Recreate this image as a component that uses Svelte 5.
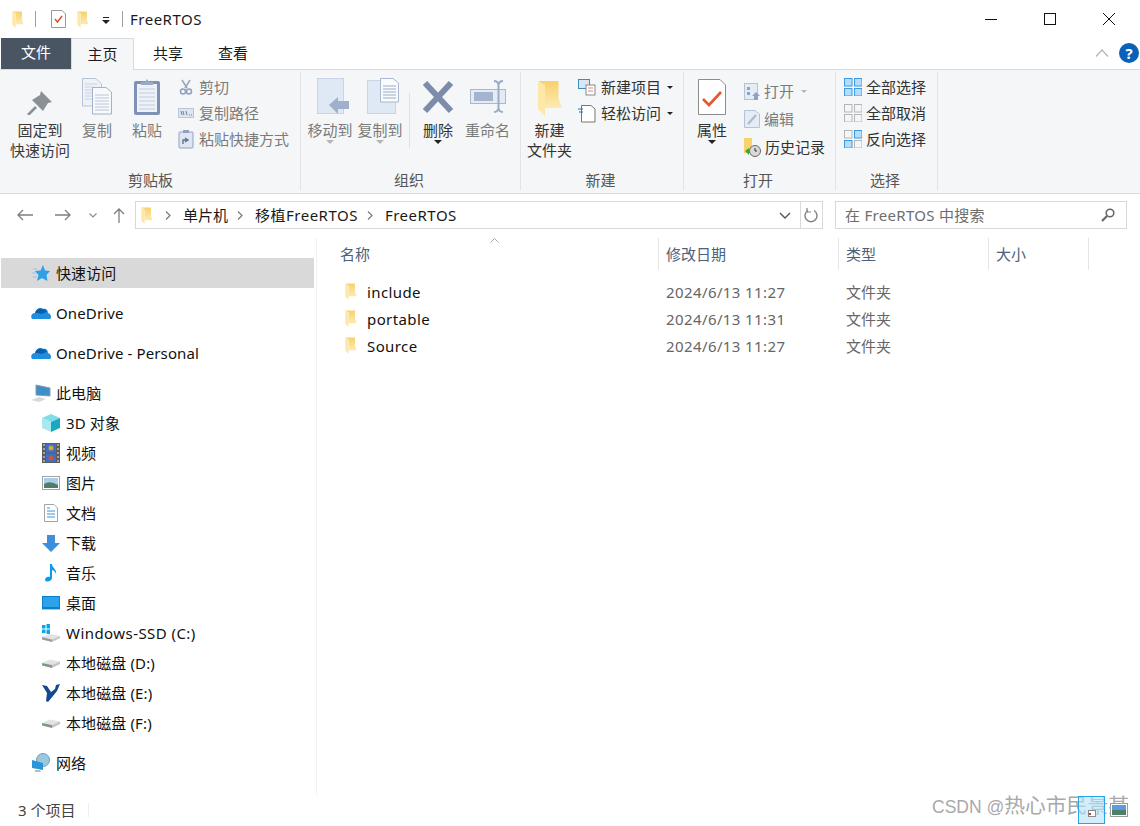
<script>
  const quick = [
    { label: '快速访问', icon: 'star', lvl: 1, active: true, gap: 10 },
    { label: 'OneDrive', icon: 'cloud', lvl: 1, gap: 10 },
    { label: 'OneDrive - Personal', icon: 'cloud', lvl: 1, gap: 10 },
    { label: '此电脑', icon: 'pc', lvl: 1 },
    { label: '3D 对象', icon: 'cube', lvl: 2 },
    { label: '视频', icon: 'film', lvl: 2 },
    { label: '图片', icon: 'pic', lvl: 2 },
    { label: '文档', icon: 'doc', lvl: 2 },
    { label: '下载', icon: 'down', lvl: 2 },
    { label: '音乐', icon: 'music', lvl: 2 },
    { label: '桌面', icon: 'desk', lvl: 2 },
    { label: 'Windows-SSD (C:)', icon: 'win', lvl: 2, wide: true },
    { label: '本地磁盘 (D:)', icon: 'disk', lvl: 2 },
    { label: '本地磁盘 (E:)', icon: 'ni', lvl: 2 },
    { label: '本地磁盘 (F:)', icon: 'disk', lvl: 2, gap: 10 },
    { label: '网络', icon: 'net', lvl: 1 }
  ];
  const files = [
    { name: 'include', date: '2024/6/13 11:27' },
    { name: 'portable', date: '2024/6/13 11:31' },
    { name: 'Source', date: '2024/6/13 11:27' }
  ];
</script>

{#snippet folder(w, h)}
  <svg width={w} height={h} viewBox="0 0 24 36">
    <defs>
      <linearGradient id="fg" x1="0" y1="0" x2="0" y2="1">
        <stop offset="0" stop-color="#f7d16c" />
        <stop offset="1" stop-color="#fdeab4" />
      </linearGradient>
    </defs>
    <path d="M0 1 H20.5 V19 L24 28 H7 V6Z" fill="url(#fg)" />
    <path d="M0 1 L7 5 V36 L0 29Z" fill="#fde8a8" />
  </svg>
{/snippet}

{#snippet grid(a, b, c, d)}
  <svg width="18" height="18" viewBox="0 0 18 18">
    {#each [[0, 0, a], [10, 0, b], [0, 10, c], [10, 10, d]] as [x, y, on]}
      <rect x={x + 0.5} y={y + 0.5} width="7.5" height="7.5" fill={on ? '#b5dcfb' : '#f5f6f7'} stroke={on ? '#3b9ae2' : '#b5b5b5'} />
    {/each}
  </svg>
{/snippet}

{#snippet chev()}
  <svg class="chev" width="10" height="9" viewBox="0 0 10 9"><path d="M3 .5 L7 4.5 L3 8.5" fill="none" stroke="#7a7a7a" stroke-width="1.2" /></svg>
{/snippet}

{#snippet navIcon(t)}
  {#if t === 'star'}
    <svg width="18" height="18" viewBox="0 0 18 18"><path d="M11 1 L13 6.5 L18 7 L14.5 11 L15.5 17 L10 14 L5 17 L6.5 11 L3 7 L8.5 6.5Z" fill="#2f9fe6" /><path d="M1 5h4M0 9h4M1 13h4" stroke="#8cc7ef" /></svg>
  {:else if t === 'cloud'}
    <svg width="20" height="14" viewBox="0 0 20 14"><path d="M1 13 C-1 10 1 7 4 7 C5 3 9 1 12 3 C15 2 17 4 17 7 C20 8 21 11 19 13Z" fill="#1e8fe0" /><path d="M4 7 C5 3 9 1 12 3 C14 3 15 4 16 6 L10 8 L7 7Z" fill="#0b5fa8" /></svg>
  {:else if t === 'pc'}
    <svg width="20" height="20" viewBox="0 0 20 20"><path d="M5 2 L19 5 V13 L5 12Z" fill="#3d8fc9" stroke="#8d9aa5" /><path d="M0 17 L8 14 L15 16 L8 19Z" fill="#d6d8da" /></svg>
  {:else if t === 'cube'}
    <svg width="18" height="18" viewBox="0 0 18 18"><path d="M9 0 L18 4 L9 8 L0 4Z" fill="#7fdde8" /><path d="M0 4 L9 8 V18 L0 14Z" fill="#a9e9ee" /><path d="M18 4 L9 8 V18 L18 14Z" fill="#1aa7c2" /></svg>
  {:else if t === 'film'}
    <svg width="18" height="20" viewBox="0 0 18 20"><rect width="18" height="20" fill="#5c5c5c" /><rect x="4" y="1" width="10" height="8.5" fill="#3a70c9" /><rect x="4" y="10.5" width="10" height="8.5" fill="#3a70c9" /><circle cx="9" cy="5" r="2.5" fill="#d8a23a" /><circle cx="9" cy="15" r="2.5" fill="#c9563a" /><path d="M1 2h2M1 6h2M1 10h2M1 14h2M1 18h2M15 2h2M15 6h2M15 10h2M15 14h2M15 18h2" stroke="#e8e8e8" /></svg>
  {:else if t === 'pic'}
    <svg width="18" height="14" viewBox="0 0 18 14"><rect x=".5" y=".5" width="17" height="13" fill="#fff" stroke="#a3a3a3" /><rect x="2" y="2" width="14" height="10" fill="#a9cdea" /><path d="M2 8 Q8 4 16 9 V12 H2Z" fill="#4d7f68" /></svg>
  {:else if t === 'doc'}
    <svg width="14" height="18" viewBox="0 0 14 18"><path d="M.5.5 H10 L13.5 4 V17.5 H.5Z" fill="#fff" stroke="#a3a3a3" /><path d="M3 4h3M3 7h8M3 10h8M3 13h8" stroke="#3e94d6" /></svg>
  {:else if t === 'down'}
    <svg width="18" height="17" viewBox="0 0 18 17"><path d="M5 0 H13 V8 H18 L9 17 L0 8 H5Z" fill="#3d8fdc" /></svg>
  {:else if t === 'music'}
    <svg width="12" height="18" viewBox="0 0 12 18"><path d="M5 0 H7 C7 4 12 5 11 10 C10 7 8 6 7 6 V14 C7 17 1 19 0 16 C0 13 3 12 5 13Z" fill="#0a9bf0" /></svg>
  {:else if t === 'desk'}
    <svg width="18" height="14" viewBox="0 0 18 14"><rect width="18" height="13" fill="#0e7ec9" /><path d="M1 1h16v10H1z" fill="#2aa3ec" /><path d="M0 13h18v1H0z" fill="#a9c7dd" /></svg>
  {:else if t === 'win'}
    <svg width="18" height="18" viewBox="0 0 18 18"><path d="M0 13 L8 10 L18 12 L10 15.5Z" fill="#e2e2e2" /><path d="M0 13 L10 15.5 V18 L0 15.5Z" fill="#9a9a9a" /><path d="M10 15.5 L18 12 V14 L10 18Z" fill="#c4c4c4" /><path d="M0 1h3.5v3.5H0zM4.5 0h3.5v4.5H4.5zM0 5.5h3.5V9H0zM4.5 5.5h3.5V10H4.5z" fill="#09a7ea" /></svg>
  {:else if t === 'disk'}
    <svg width="18" height="10" viewBox="0 0 18 10"><path d="M0 5 L8 1.5 L18 3.5 L10 7Z" fill="#e2e2e2" /><path d="M0 5 L10 7 V10 L0 7.5Z" fill="#8f8f8f" /><path d="M10 7 L18 3.5 V6 L10 10Z" fill="#c4c4c4" /><path d="M2 6.5l2 .5" stroke="#3fc14a" /></svg>
  {:else if t === 'ni'}
    <svg width="18" height="18" viewBox="0 0 18 18"><path d="M0 1 L5 2 L9 8 L13 5 L14 1 L18 0 L15 7 L11 12 L6 18 L4 17 L5 9Z" fill="#14498f" /></svg>
  {:else if t === 'net'}
    <svg width="18" height="20" viewBox="0 0 18 20"><circle cx="11" cy="7" r="6.5" fill="#9cc8de" stroke="#6d9db8" /><path d="M0 7 L11 10 V17 L0 15Z" fill="#2b95d8" /><path d="M3 17h5l1 2H3z" fill="#b9bcbf" /></svg>
  {/if}
{/snippet}

<div class="win">
  <header class="title">
    {@render folder(12, 17)}
    <span class="bar first"></span>
    <svg class="qa" width="15" height="18" viewBox="0 0 15 18"><path d="M.5.5 H11 L14.5 4 V17.5 H.5Z" fill="#fff" stroke="#9a9a9a" /><path d="M4 9 L6.5 12 L11 6" fill="none" stroke="#e8481c" stroke-width="1.4" /></svg>
    {@render folder(12, 17)}
    <svg class="drop" width="8" height="7" viewBox="0 0 8 7"><path d="M1 .5h6" stroke="#222" /><path d="M0 3h8L4 7z" fill="#222" /></svg>
    <span class="bar"></span>
    <span class="name">FreeRTOS</span>
    <div class="controls">
      <svg width="12" height="12" viewBox="0 0 12 12"><path d="M0 6.5h12" stroke="#111" /></svg>
      <svg width="12" height="12" viewBox="0 0 12 12"><rect x=".5" y=".5" width="11" height="11" fill="none" stroke="#111" /></svg>
      <svg width="12" height="12" viewBox="0 0 12 12"><path d="M0 0 L12 12 M12 0 L0 12" stroke="#111" /></svg>
    </div>
  </header>

  <nav class="tabs">
    <span class="file">文件</span>
    <span class="tab on">主页</span>
    <span class="tab t2">共享</span>
    <span class="tab t3">查看</span>
    <svg class="fold" width="14" height="8" viewBox="0 0 14 8"><path d="M1 7.5 L7 1 L13 7.5" fill="none" stroke="#b5b5b5" stroke-width="1.2" /></svg>
    <span class="help">?</span>
  </nav>

  <section class="ribbon">
    <div class="group g1">
      <div class="tools">
        <div class="big" style="width:66px">
          <svg class="ico" width="26" height="37" viewBox="0 -12 26 37"><path d="M14 1 L25 12 L21 13 L16 21 L5 10 L13 5Z" fill="#899196" /><path d="M9 17 L1 25" stroke="#899196" stroke-width="2.6" /></svg>
          <span>固定到<br />快速访问</span>
        </div>
        <div class="big off" style="width:48px">
          <svg class="ico" width="30" height="37" viewBox="0 0 30 37">
            <path d="M.5.5 H14 L19.5 6 V28 H.5Z" fill="#eef2f8" stroke="#b6c3d8" />
            <path d="M3 6h12M3 9h8M3 12h8M3 15h8M3 18h8M3 21h8" stroke="#c6d2e3" />
            <path d="M10.5 9.5 H24 L29.5 14 V36 H10.5Z" fill="#f8f9fb" stroke="#9fb2cf" />
            <path d="M13 17h14M13 20h14M13 23h14M13 26h14M13 29h14M13 32h14" stroke="#b9c6da" />
          </svg>
          <span>复制</span>
        </div>
        <div class="big off" style="width:52px">
          <svg class="ico" width="26" height="37" viewBox="0 0 26 37">
            <rect x="0" y="3" width="26" height="34" rx="2" fill="#7f92b5" />
            <rect x="3" y="6" width="20" height="28" fill="#eef1f7" />
            <path d="M5 11h16M5 15h16M5 19h16M5 23h16M5 27h16M5 31h16" stroke="#c3cee0" />
            <path d="M7 7 V4 H11 L13 1 L15 4 H19 V7Z" fill="#9aabc7" />
          </svg>
          <span>粘贴</span>
        </div>
        <div class="smalls s1 off">
          <div class="small"><svg width="16" height="16" viewBox="0 0 16 16"><path d="M4 1 L9 9 M12 1 L7 9" stroke="#9aa7bd" stroke-width="1.6" /><circle cx="5" cy="12.5" r="2.5" fill="none" stroke="#8fa1c0" stroke-width="1.5" /><circle cx="11" cy="12.5" r="2.5" fill="none" stroke="#8fa1c0" stroke-width="1.5" /></svg><span>剪切</span></div>
          <div class="small"><svg width="16" height="16" viewBox="0 0 16 16"><rect x=".5" y="3.5" width="15" height="9" fill="#dfe6f2" stroke="#b9c6da" /><path d="M3 6l1 4M5 6l1 4M8 6l1 4" stroke="#6b7f9e" /><path d="M11 10h3" stroke="#6b7f9e" stroke-dasharray="1 1" /></svg><span>复制路径</span></div>
          <div class="small"><svg width="16" height="19" viewBox="0 0 16 19"><rect x="1" y="2" width="14" height="16" rx="1" fill="#dfe6f2" stroke="#8fa1c0" /><rect x="5" y="0" width="6" height="3" fill="#8fa1c0" /><path d="M5 14 V10 H9 M7 8 L10 10 L7 12" fill="none" stroke="#5d7396" stroke-width="1.4" /></svg><span>粘贴快捷方式</span></div>
        </div>
      </div>
      <p class="glabel">剪贴板</p>
    </div>

    <div class="group g2">
      <div class="tools">
        <div class="big off" style="width:50px">
          <svg class="ico nudge" width="32" height="37" viewBox="0 0 32 37"><rect x=".5" y=".5" width="26" height="35" fill="#dfe8f5" stroke="#c8d5e8" /><path d="M12 27 L21 19 V23 H32 V31 H21 V36Z" fill="#9fb0cb" /></svg>
          <span>移动到</span>
          <i class="caret"></i>
        </div>
        <div class="big off" style="width:50px">
          <svg class="ico nudge" width="32" height="37" viewBox="0 0 32 37"><rect x=".5" y="2.5" width="28" height="33" fill="#dfe8f5" stroke="#c8d5e8" /><path d="M13.5.5 H26 L31.5 5 V24 H13.5Z" fill="#fafbfd" stroke="#a8b8d0" /><path d="M16 8h13M16 11h13M16 14h13M16 17h13M16 20h13" stroke="#9aabc7" /></svg>
          <span>复制到</span>
          <i class="caret"></i>
        </div>
        <span class="vsep"></span>
        <div class="big dark" style="width:50px">
          <svg class="ico" width="32" height="37" viewBox="0 0 32 37"><path d="M3 5 L29 33 M29 5 L3 33" stroke="#7c8caa" stroke-width="6" /></svg>
          <span>删除</span>
          <i class="caret dk"></i>
        </div>
        <div class="big off" style="width:49px">
          <svg class="ico" width="36" height="37" viewBox="0 0 36 37"><rect x=".5" y="11.5" width="35" height="14" fill="#e4ebf5" stroke="#a8b8d0" /><rect x="4" y="14" width="19" height="9" fill="#a3b4ce" /><path d="M24 3 Q28 3 28.5 7 V30 Q29 34 33 34 M33 3 Q29 3 28.5 7 M28.5 30 Q28 34 24 34" fill="none" stroke="#9aabc7" stroke-width="2" /></svg>
          <span>重命名</span>
        </div>
      </div>
      <p class="glabel">组织</p>
    </div>

    <div class="group g3">
      <div class="tools">
        <div class="big dark" style="width:57px">
          <span class="fico">{@render folder(24, 36)}</span>
          <span>新建<br />文件夹</span>
        </div>
        <div class="smalls s3 dark">
          <div class="small"><svg width="18" height="17" viewBox="0 0 18 17"><rect x=".5" y=".5" width="11" height="9" fill="#dbe5f3" stroke="#3a8fb8" /><rect x="8" y="6" width="9" height="10" fill="#fff" stroke="#8a8a8a" /><path d="M10 9h5M10 12h5" stroke="#d98a8a" /></svg><span>新建项目</span><i class="tri"></i></div>
          <div class="small"><svg width="18" height="19" viewBox="0 0 18 19"><path d="M3.5 1.5 H13 L17 5 V18 H3.5Z" fill="#fff" stroke="#777" /><path d="M0 5h5M1 8h4" stroke="#2a6fb8" stroke-width="1.2" /></svg><span>轻松访问</span><i class="tri"></i></div>
        </div>
      </div>
      <p class="glabel">新建</p>
    </div>

    <div class="group g4">
      <div class="tools">
        <div class="big dark" style="width:56px">
          <svg class="ico" width="28" height="37" viewBox="0 0 28 37"><path d="M.5 1.5 H22 L27.5 7 V36.5 H.5Z" fill="#fff" stroke="#8d8d8d" /><path d="M5 21 L11 27 L23 14" fill="none" stroke="#e8562a" stroke-width="2.6" /></svg>
          <span>属性</span>
          <i class="caret dk"></i>
        </div>
        <div class="smalls s4">
          <div class="small off"><svg width="16" height="20" viewBox="0 0 16 20"><rect x=".5" y="2.5" width="13" height="16" fill="#e6ecf5" stroke="#b5c3d9" /><path d="M3 6h3v3H3zM3 11h3v3H3z" fill="#8da3c4" /><path d="M8 15 L12 11 L16 15 H14 V19 H10 V15Z" fill="#8da3c4" /></svg><span>打开</span><i class="tri lt"></i></div>
          <div class="small off"><svg width="16" height="18" viewBox="0 0 16 18"><path d="M.5.5 H11 L15.5 4 V17.5 H.5Z" fill="#e6ecf5" stroke="#b5c3d9" /><path d="M4 14 L12 5" stroke="#a8b8d0" stroke-width="2" /></svg><span>编辑</span></div>
          <div class="small dark"><svg width="17" height="19" viewBox="0 0 17 19"><path d="M0 0 H8 V15 H0Z" fill="#f8d26f" /><circle cx="11" cy="13" r="5.5" fill="#d9d9d9" stroke="#666" /><path d="M11 10v3h2" stroke="#333" fill="none" /><path d="M1 13 L5 10 V12 H6 V15 H5 V17Z" fill="#3fa535" /></svg><span>历史记录</span></div>
        </div>
      </div>
      <p class="glabel">打开</p>
    </div>

    <div class="group g5">
      <div class="smalls s5 dark">
        <div class="small">{@render grid(true, true, true, true)}<span>全部选择</span></div>
        <div class="small">{@render grid(false, false, false, false)}<span>全部取消</span></div>
        <div class="small">{@render grid(false, true, true, false)}<span>反向选择</span></div>
      </div>
      <p class="glabel">选择</p>
    </div>
  </section>

  <div class="addr">
    <svg width="16" height="12" viewBox="0 0 16 12"><path d="M16 6H1 M6 1 L1 6 L6 11" fill="none" stroke="#7f7f7f" stroke-width="1.3" /></svg>
    <svg class="fw" width="16" height="12" viewBox="0 0 16 12"><path d="M0 6H15 M10 1 L15 6 L10 11" fill="none" stroke="#7f7f7f" stroke-width="1.3" /></svg>
    <svg class="rd" width="8" height="5" viewBox="0 0 8 5"><path d="M.5.5 L4 4 L7.5.5" fill="none" stroke="#8c8c8c" stroke-width="1.2" /></svg>
    <svg class="up" width="12" height="15" viewBox="0 0 12 15"><path d="M6 15V1 M1 6 L6 1 L11 6" fill="none" stroke="#7f7f7f" stroke-width="1.3" /></svg>
    <div class="path">
      <span class="pf">{@render folder(12, 17)}</span>
      {@render chev()}<span>单片机</span>
      {@render chev()}<span class="lat">移植FreeRTOS</span>
      {@render chev()}<span class="lat">FreeRTOS</span>
      <svg class="pdrop" width="12" height="7" viewBox="0 0 12 7"><path d="M1 1 L6 6 L11 1" fill="none" stroke="#555" stroke-width="1.4" /></svg>
      <div class="refresh">
        <svg width="15" height="15" viewBox="0 0 15 15"><path d="M10 2.5 A6 6 0 1 1 4 2.5" fill="none" stroke="#7f7f7f" stroke-width="1.4" /><path d="M3 0 V4 H7" fill="none" stroke="#7f7f7f" stroke-width="1.2" /></svg>
      </div>
    </div>
    <div class="search">
      <span class="lat2">在 FreeRTOS 中搜索</span>
      <svg width="14" height="14" viewBox="0 0 14 14"><circle cx="9" cy="5" r="3.8" fill="none" stroke="#666" stroke-width="1.6" /><path d="M6 8 L1 13" stroke="#666" stroke-width="2.2" /></svg>
    </div>
  </div>

  <main class="body">
    <aside class="side">
      {#each quick as item}
        <div class="row" class:active={item.active} class:l2={item.lvl === 2} class:gap={item.gap} class:wide={item.wide}>
          <span class="ni">{@render navIcon(item.icon)}</span>
          <span>{item.label}</span>
        </div>
      {/each}
    </aside>
    <section class="list">
      <div class="head">
        <svg class="sort" width="9" height="5" viewBox="0 0 9 5"><path d="M.5 4.5 L4.5 .5 L8.5 4.5" fill="none" stroke="#a8a8a8" /></svg>
        <span class="h c1">名称</span>
        <span class="h c2">修改日期</span>
        <span class="h c3">类型</span>
        <span class="h c4">大小</span>
      </div>
      {#each files as f}
        <div class="file-row">
          <span class="c1 fname">{@render folder(12, 17)}<b>{f.name}</b></span>
          <span class="c2 muted date">{f.date}</span>
          <span class="c3 muted">文件夹</span>
        </div>
      {/each}
    </section>
  </main>

  <footer class="status"><span>3 个项目</span><i></i></footer>

  <div class="mark"><span>CSDN @</span>热心市民景某</div>
  <div class="viewbtns">
    <span class="vb on"><svg width="15" height="13" viewBox="0 0 15 13"><rect x="4.5" y="6.5" width="7" height="6" fill="#fff" stroke="#8a8a8a" /><rect x="5" y="9" width="2" height="2" fill="#c0392b" /></svg></span>
    <span class="vb"><svg width="18" height="14" viewBox="0 0 18 14"><rect x=".5" y=".5" width="17" height="13" fill="#fff" stroke="#9a9a9a" /><rect x="2" y="2" width="14" height="5" fill="#5b9be0" /><rect x="2" y="7" width="14" height="5" fill="#4d7f68" /></svg></span>
  </div>
</div>

<style>
  :global(body) {
    margin: 0;
    background: #fff;
  }
  .win {
    position: relative;
    width: 1140px;
    height: 826px;
    overflow: hidden;
    font-family: "Noto Sans", "Noto Sans CJK SC", sans-serif;
    font-size: 15px;
    color: #1a1a1a;
    line-height: 20px;
  }
  .title {
    height: 38px;
    display: flex;
    align-items: center;
    padding-left: 12px;
  }
  .bar {
    width: 1px;
    height: 16px;
    background: #a0a0a0;
    margin: 0 7px 0 0;
  }
  .bar.first {
    margin: 0 15px 0 11px;
  }
  .qa {
    margin: 0 11px 0 0;
  }
  .drop {
    margin: 2px 12px 0 13px;
  }
  .name {
    letter-spacing: 0.5px;
  }
  .controls {
    margin-left: auto;
    display: flex;
    gap: 47px;
    padding-right: 25px;
  }
  .tabs {
    height: 31px;
    display: flex;
    align-items: stretch;
    padding-left: 1px;
    position: relative;
  }
  .file {
    width: 70px;
    background: #4a5564;
    color: #fff;
    text-align: center;
    line-height: 29px;
  }
  .tab {
    line-height: 30px;
    text-align: center;
  }
  .tab.on {
    width: 63px;
    border: 1px solid #dadbdc;
    border-bottom: 0;
    background: #f5f6f7;
    box-sizing: border-box;
    position: relative;
    z-index: 1;
    height: 32px;
  }
  .t2 {
    margin-left: 19px;
  }
  .t3 {
    margin-left: 35px;
  }
  .fold {
    margin: 11px 0 0 auto;
  }
  .help {
    width: 20px;
    height: 20px;
    border-radius: 50%;
    background: #0a62b8;
    color: #fff;
    font-weight: 700;
    font-size: 15px;
    text-align: center;
    margin: 5px 1px 0 10px;
  }
  .ribbon {
    height: 123px;
    background: #f5f6f7;
    border-top: 1px solid #dadbdc;
    border-bottom: 1px solid #dadbdc;
    display: flex;
    color: #444;
  }
  .group {
    border-right: 1px solid #e1e3e6;
    box-sizing: border-box;
    margin-top: 2px;
    height: 118px;
    display: flex;
    flex-direction: column;
  }
  .g1 { width: 301px; }
  .g2 { width: 220px; }
  .g3 { width: 163px; }
  .g4 { width: 152px; }
  .g5 { width: 102px; }
  .g1 .tools { padding-left: 7px; }
  .g2 .tools { padding-left: 4px; }
  .tools {
    display: flex;
    flex: 1;
    min-height: 0;
  }
  .glabel {
    margin: 0;
    padding-right: 3px;
    text-align: center;
    height: 20px;
    line-height: 20px;
    color: #555;
    flex: none;
  }
  .g1 .glabel {
    padding: 0 0 0 1px;
  }
  .big {
    display: flex;
    flex-direction: column;
    align-items: center;
    text-align: center;
    color: #3a3a3a;
  }
  .big.off { color: #7b7b7b; }
  .big.dark { color: #333; }
  .ico {
    flex: none;
    display: block;
    margin-top: 6px;
    margin-bottom: 5px;
  }
  .ico.nudge {
    margin-left: 6px;
  }
  .fico {
    flex: none;
    display: block;
    height: 36px;
    margin-top: 8px;
    margin-bottom: 4px;
  }
  .caret {
    width: 0;
    height: 0;
    border: 4px solid transparent;
    border-top-color: #b5b5b5;
    border-bottom: 0;
    margin-top: 0;
  }
  .caret.dk {
    border-top-color: #222;
  }
  .vsep {
    width: 1px;
    height: 55px;
    margin: 21px 3px 0 4px;
    background: #dfe1e4;
  }
  .smalls {
    display: flex;
    flex-direction: column;
    gap: 6px;
    padding-top: 5px;
  }
  .s1 { margin-left: 5px; }
  .s3 { margin-left: 0; }
  .s4 { margin-left: 4px; gap: 8px; padding-top: 9px; }
  .s5 { margin-left: 8px; flex: 1; }
  .small {
    display: flex;
    align-items: center;
    gap: 5px;
    height: 20px;
  }
  .small svg { flex: none; }
  .off { color: #7b7b7b; }
  .dark { color: #333; }
  .s4 .small, .s5 .small { gap: 4px; }
  .tri {
    width: 0;
    height: 0;
    border: 3.5px solid transparent;
    border-top-color: #222;
    border-bottom: 0;
    margin-left: 1px;
  }
  .tri.lt {
    border-top-color: #b5b5b5;
    margin-left: 3px;
  }
  .addr {
    height: 44px;
    display: flex;
    align-items: center;
    padding-left: 17px;
    padding-bottom: 2px;
    box-sizing: border-box;
  }
  .fw { margin-left: 22px; }
  .rd { margin-left: 18px; }
  .up { margin-left: 16px; }
  .path {
    margin-left: 10px;
    width: 688px;
    height: 28px;
    border: 1px solid #d9d9d9;
    box-sizing: border-box;
    display: flex;
    align-items: center;
    padding-left: 5px;
    gap: 5px;
  }
  .pf {
    display: flex;
    margin-right: 3px;
  }
  .chev {
    flex: none;
    margin: 0 5px 0 2px;
  }
  .lat { letter-spacing: 0.5px; }
  .lat2 { letter-spacing: 0.3px; }
  .pdrop { margin-left: auto; }
  .refresh {
    width: 21px;
    height: 26px;
    border-left: 1px solid #d9d9d9;
    display: flex;
    align-items: center;
    justify-content: center;
    margin-left: 4px;
  }
  .search {
    margin-left: 12px;
    width: 292px;
    height: 28px;
    border: 1px solid #d9d9d9;
    box-sizing: border-box;
    display: flex;
    align-items: center;
    justify-content: space-between;
    padding: 0 11px 0 9px;
    color: #6d6d6d;
  }
  .body {
    display: flex;
    height: 557px;
  }
  .side {
    width: 317px;
    flex: none;
    padding: 20px 0 0 1px;
    box-sizing: border-box;
    border-right: 1px solid #f0f0f0;
  }
  .row {
    height: 30px;
    width: 313px;
    display: flex;
    align-items: center;
    padding-left: 30px;
    box-sizing: border-box;
    color: #111;
    letter-spacing: 0.12px;
  }
  .row.l2 { padding-left: 41px; }
  .row.gap { margin-bottom: 10px; }
  .row.wide { letter-spacing: 0.44px; }
  .row.active { background: #d9d9d9; }
  .ni {
    width: 20px;
    margin-right: 5px;
    display: flex;
    justify-content: center;
    flex: none;
  }
  .l2 .ni { width: 18px; margin-right: 6px; }
  .list {
    flex: 1;
    position: relative;
  }
  .head {
    display: flex;
    height: 32px;
    position: relative;
  }
  .sort {
    position: absolute;
    left: 173px;
    top: 0;
  }
  .h {
    color: #4c607a;
    border-right: 1px solid #e5e5e5;
    box-sizing: border-box;
    line-height: 32px;
    padding-left: 7px;
  }
  .c1 { width: 342px; flex: none; }
  .c2 { width: 180px; flex: none; }
  .c3 { width: 150px; flex: none; }
  .c4 { width: 100px; flex: none; }
  .h.c1 { padding-left: 23px; }
  .file-row {
    display: flex;
    height: 27px;
    align-items: center;
  }
  .head + .file-row { margin-top: 8px; }
  .file-row .c2, .file-row .c3 { padding-left: 7px; box-sizing: border-box; }
  .date { letter-spacing: 0.4px; }
  .fname {
    display: flex;
    align-items: center;
    padding-left: 28px;
    box-sizing: border-box;
    gap: 10px;
  }
  .fname b { font-weight: 400; color: #111; letter-spacing: 0.4px; }
  .muted { color: #666; }
  .status {
    height: 32px;
    display: flex;
    align-items: center;
    padding: 0 0 2px 18px;
    box-sizing: border-box;
    color: #444;
  }
  .status i {
    width: 1px;
    height: 14px;
    background: #eee;
    margin-left: 13px;
  }
  .mark {
    position: absolute;
    right: 11px;
    top: 794px;
    font-family: "Liberation Sans", "Noto Sans CJK SC", sans-serif;
    font-size: 20.8px;
    line-height: 24px;
    color: #a9a9a9;
  }
  .mark span {
    font-size: 17.5px;
  }
  .viewbtns {
    position: absolute;
    left: 1078px;
    top: 796px;
    display: flex;
    gap: 5px;
    align-items: center;
  }
  .vb {
    width: 27px;
    height: 28px;
    display: flex;
    align-items: center;
    justify-content: center;
    box-sizing: border-box;
  }
  .vb.on {
    background: rgba(180, 225, 250, 0.6);
    border: 1px solid #2aa3e0;
  }
  .vb:last-child {
    width: 18px;
  }
</style>
